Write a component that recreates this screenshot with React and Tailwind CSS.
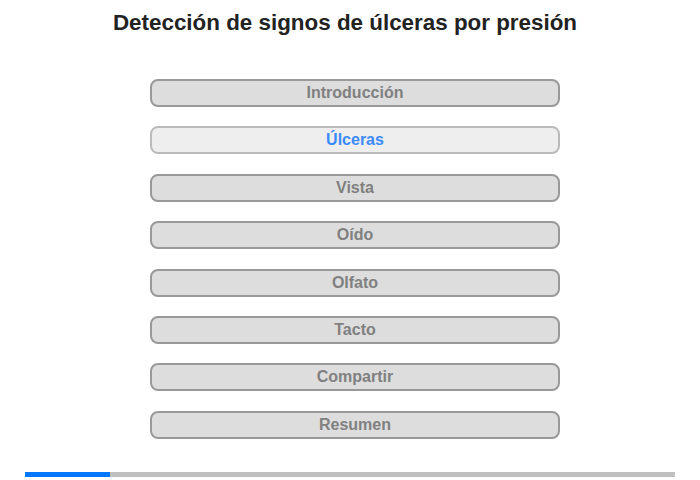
const items = ['Introducción', 'Úlceras', 'Vista', 'Oído', 'Olfato', 'Tacto', 'Compartir', 'Resumen']

export default function App() {
  return (
    <div className="w-[700px] h-[480px] bg-white font-['Liberation_Sans',Arial,sans-serif] flex flex-col">
      <h1 className="pt-[10px] h-[79px] text-center text-[22.4px] leading-[26px] font-bold text-[#222] pr-[10px]">
        Detección de signos de úlceras por presión
      </h1>

      <nav className="flex flex-col items-center gap-[19.4px] pl-[10px]">
        {items.map((label, i) => (
          <button
            key={label}
            className={
              i === 1
                ? 'w-[410px] h-[28px] rounded-[8px] border-2 border-[#bbb] bg-[#eee] text-[#3b8bfb] text-[16px] font-bold leading-none'
                : 'w-[410px] h-[28px] rounded-[8px] border-2 border-[#999] bg-[#ddd] text-[#808080] text-[16px] font-bold leading-none'
            }
          >
            {label}
          </button>
        ))}
      </nav>

      <div className="mt-[33px] mx-[25px] h-[5px] bg-[#c0c0c0] flex">
        <div className="w-[85px] h-full bg-[#0077ff]" />
      </div>
    </div>
  )
}
